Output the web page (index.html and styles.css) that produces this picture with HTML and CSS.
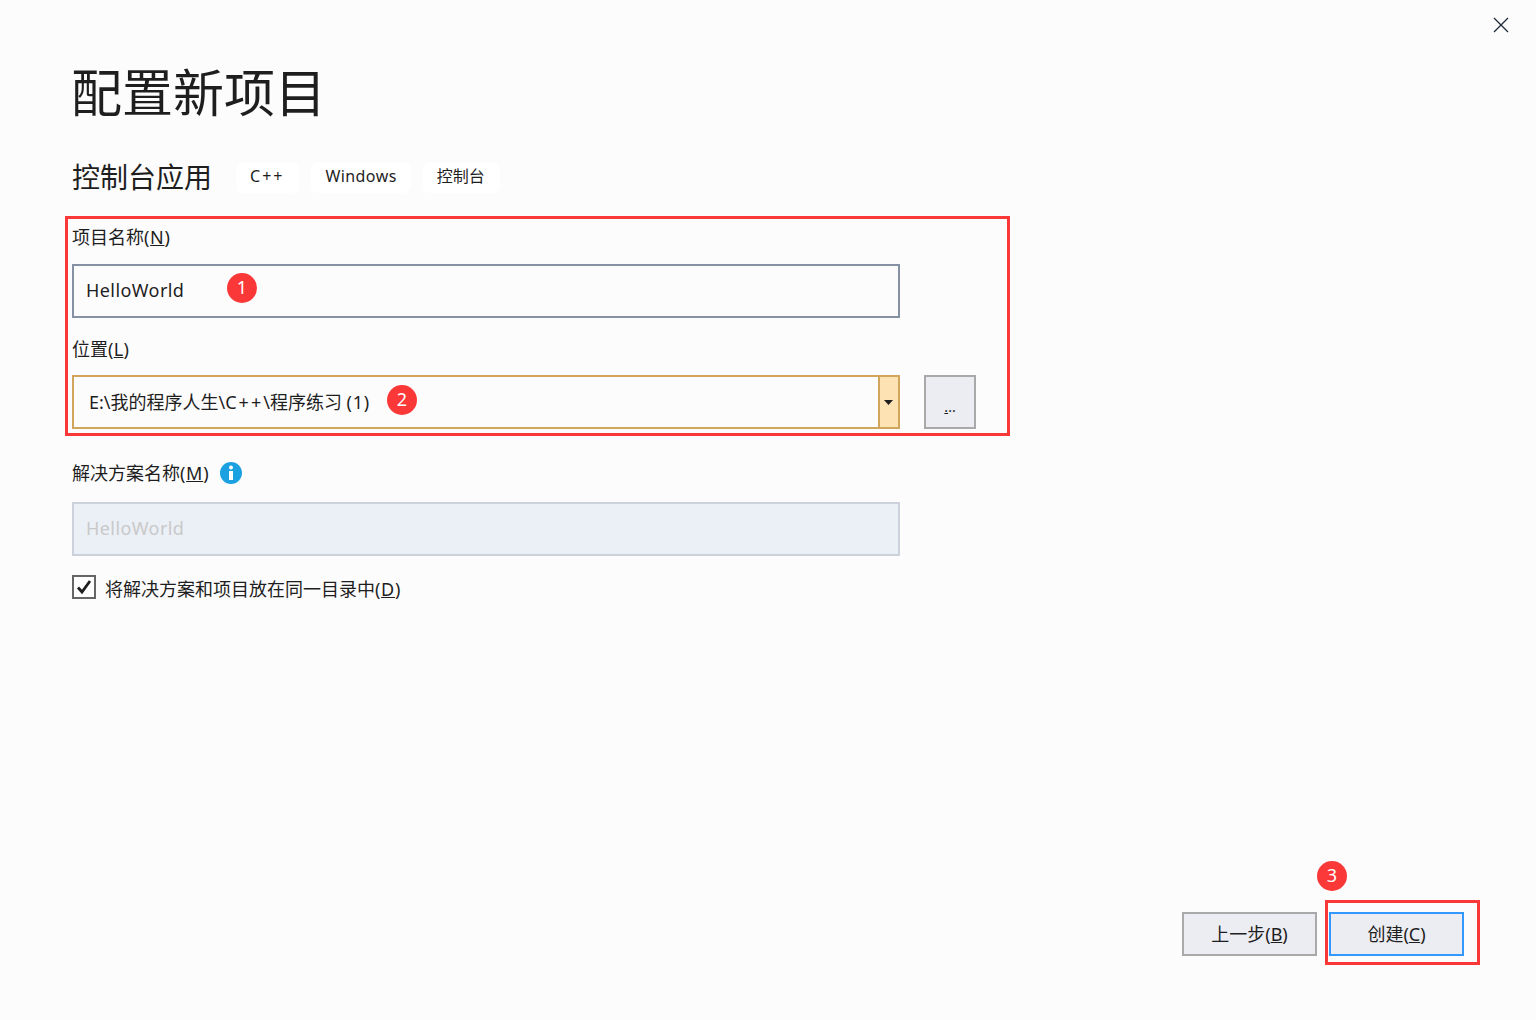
FILE: index.html
```html
<!DOCTYPE html>
<html lang="zh-CN">
<head>
<meta charset="utf-8">
<title>配置新项目</title>
<link rel="stylesheet" href="styles.css">
</head>
<body>
<div class="dialog">
  <button class="close" aria-label="关闭">
    <svg width="16" height="16" viewBox="0 0 16 16"><path d="M1 1L15 15M15 1L1 15" stroke="#1e2a3a" stroke-width="1.3" fill="none"/></svg>
  </button>
  <h1 class="title">配置新项目</h1>
  <div class="subtitle-row">
    <h2 class="subtitle">控制台应用</h2>
    <div class="tags">
      <span class="tag tag-cpp">C++</span>
      <span class="tag tag-latin">Windows</span>
      <span class="tag tag-cjk">控制台</span>
    </div>
  </div>
  <section class="highlight">
    <label class="label label-first">项目名称<span class="key">(<u>N</u>)</span></label>
    <div class="field-row">
      <div class="input"><span class="latin">HelloWorld</span><span class="badge badge-one">1</span></div>
    </div>
    <label class="label label-second">位置<span class="key-short">(<u>L</u>)</span></label>
    <div class="field-row location-row">
      <div class="combo">
        <div class="combo-text">E:\我的程序人生\<span class="cpp">C++</span>\程序练习 <span class="key">(1)</span><span class="badge badge-two">2</span></div>
        <div class="combo-arrow"><svg class="arrow" width="9" height="5" viewBox="0 0 9 5"><path d="M0 0H9L4.500 5Z" fill="#1e1e1e"/></svg></div>
      </div>
      <button class="browse"><u>.</u>..</button>
    </div>
  </section>
  <div class="label solution-label">
    <span>解决方案名称<span class="key">(<u>M</u>)</span></span>
    <svg class="info" width="22" height="22" viewBox="0 0 22 22"><circle cx="11" cy="11" r="11" fill="#1ba1e2"/><circle cx="11" cy="5.500" r="2" fill="#fff"/><rect x="9" y="9" width="4" height="9" fill="#fff"/></svg>
  </div>
  <div class="input input-disabled"><span class="latin">HelloWorld</span></div>
  <div class="check-row">
    <span class="checkbox"><svg width="16" height="16" viewBox="0 0 16 16"><path d="M2 8.500L6 13L14 2" stroke="#1e1e1e" stroke-width="2.800" fill="none"/></svg></span>
    <span class="check-label">将解决方案和项目放在同一目录中<span class="key">(<u>D</u>)</span></span>
  </div>
  <footer class="footer">
    <button class="btn">上一步(<u>B</u>)</button>
    <div class="primary-frame">
      <span class="badge badge-three">3</span>
      <button class="btn btn-primary">创建(<u>C</u>)</button>
    </div>
  </footer>
</div>
</body>
</html>
```
FILE: styles.css
```css
* { box-sizing: border-box; }
html, body { margin: 0; padding: 0; }
body {
  background: #fcfcfc;
  color: #1e1e1e;
  font-family: "Noto Sans", "Noto Sans CJK SC", sans-serif;
}
u { text-underline-offset: 1px; text-decoration-thickness: 1px; }
.key { letter-spacing: 0.7px; }
.key-short { letter-spacing: 0.3px; }
.latin { letter-spacing: 0.42px; }
.cpp { letter-spacing: 2px; }
.dialog {
  position: relative;
  height: 1020px;
  padding: 62px 56px 0 72px;
  display: flex;
  flex-direction: column;
  overflow: hidden;
}
.close {
  position: absolute;
  top: 17px;
  right: 27px;
  width: 16px;
  height: 16px;
  padding: 0;
  border: 0;
  background: none;
  display: flex;
}
.title {
  margin: 0 0 0 -1px;
  font-size: 51px;
  line-height: 60px;
  height: 60px;
  font-weight: 400;
}
.subtitle-row {
  margin-top: 39px;
  display: flex;
  align-items: center;
  height: 32px;
}
.subtitle {
  margin: 0;
  font-size: 28px;
  line-height: 32px;
  font-weight: 400;
}
.tags { display: flex; gap: 12px; margin-left: 24px; }
.tag {
  background: #fff;
  border-radius: 7px;
  height: 31px;
  padding: 0 14px;
  font-size: 16px;
  line-height: 29px;
}
.tag-cpp { letter-spacing: 2px; padding-right: 15px; }
.tag-latin { letter-spacing: 0.42px; }
.tag-cjk { padding-right: 15px; }
.highlight {
  margin: 23px 0 0 -7px;
  width: 945px;
  height: 220px;
  border: 3px solid #fb3838;
  padding: 6px 0 0 4px;
}
.label { display: block; font-size: 18px; line-height: 24px; }
.label-first { margin-bottom: 15px; }
.label-second { margin: 19px 0 14px; }
.field-row { display: flex; gap: 24px; }
.input {
  position: relative;
  width: 828px;
  height: 54px;
  border: 2px solid #8591a5;
  padding-left: 12px;
  font-size: 18px;
  line-height: 48px;
}
.combo {
  position: relative;
  width: 828px;
  height: 54px;
  border: 2px solid #d1a65c;
  display: flex;
  background: #fff;
}
.combo-text {
  flex: 1;
  position: relative;
  padding-left: 15px;
  font-size: 18px;
  line-height: 50px;
  background: #fcfcfc;
}
.combo-arrow {
  width: 20px;
  border-left: 2px solid #d1a65c;
  background: #fde3b4;
  display: flex;
  align-items: center;
  justify-content: center;
}
.arrow { margin-right: 1px; }
.browse {
  width: 52px;
  height: 54px;
  border: 2px solid #a9a9a9;
  background: #ecedf2;
  color: #1e1e1e;
  font: 14px/1 "Noto Sans", sans-serif;
  padding: 10px 0 0;
}
.solution-label {
  margin: 25px 0 17px;
  display: flex;
  align-items: center;
  gap: 11px;
}
.input-disabled {
  background: #ebeff6;
  border-color: #ccd1dc;
  color: #c9c9c9;
}
.check-row {
  margin-top: 17px;
  display: flex;
  align-items: center;
  gap: 9px;
}
.checkbox {
  width: 24px;
  height: 24px;
  border: 2px solid #666;
  background: #fff;
  display: flex;
  align-items: center;
  justify-content: center;
}
.check-label { font-size: 18px; line-height: 28px; position: relative; top: 2px; }
.footer {
  position: absolute;
  top: 900px;
  right: 72px;
  display: flex;
  align-items: flex-start;
  gap: 8px;
}
.btn {
  width: 135px;
  height: 44px;
  margin-top: 12px;
  border: 2px solid #a9a9a9;
  background: #ecedf2;
  color: #1e1e1e;
  font-family: inherit;
  font-size: 18px;
  line-height: 24px;
  padding: 0;
}
.btn-primary { border-color: #3399ff; margin-top: 0; }
.primary-frame {
  position: relative;
  width: 155px;
  height: 65px;
  margin-right: -16px;
  border: 3px solid #fb3838;
  padding: 9px 0 0 1px;
}
.badge {
  position: absolute;
  width: 30px;
  height: 30px;
  border-radius: 50%;
  background: #fb3838;
  color: #fff;
  font-size: 18px;
  font-weight: 400;
  line-height: 28px;
  letter-spacing: 0;
  text-align: center;
}
.badge-one { left: 153px; top: 7px; }
.badge-two { left: 313px; top: 8px; }
.badge-three { left: -11px; top: -42px; }
```
